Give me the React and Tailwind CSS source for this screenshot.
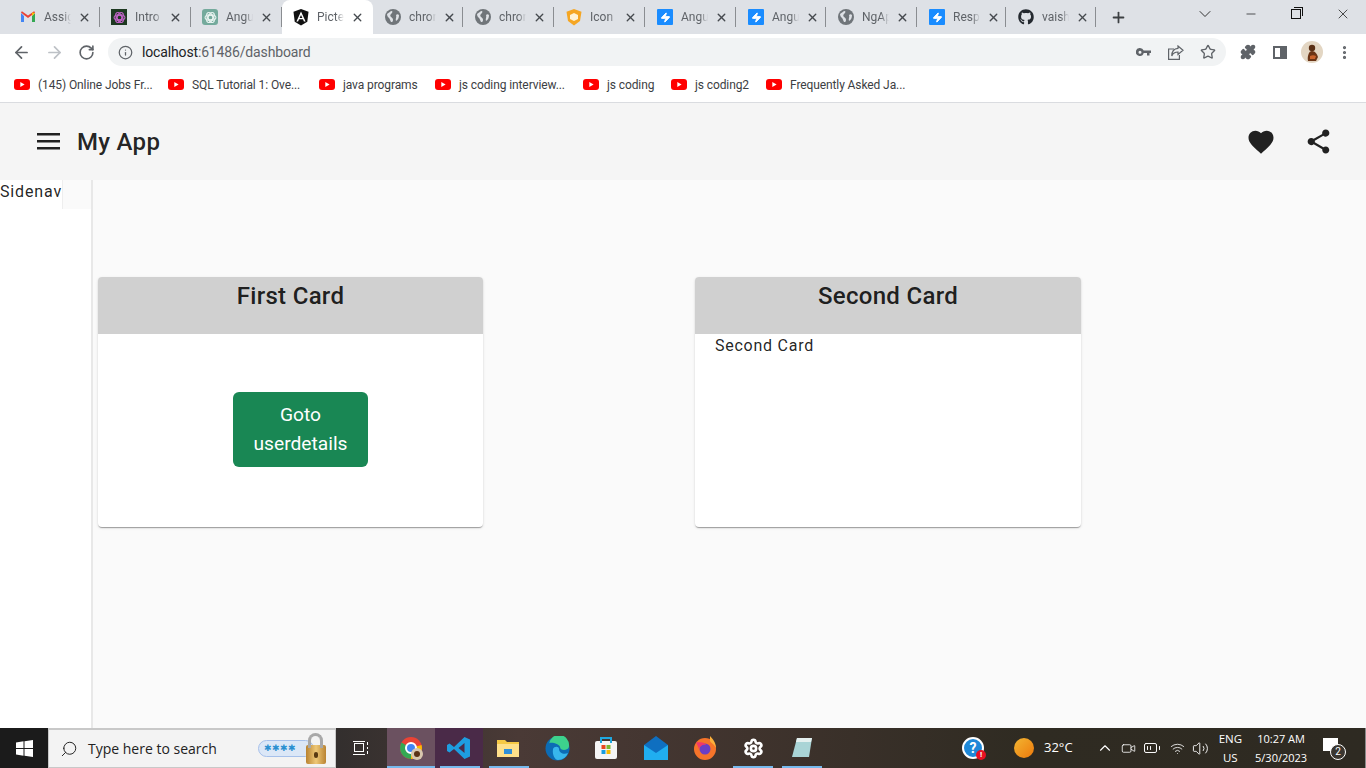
import React from 'react'
import { ArrowLeft, ArrowRight, RotateCw, Info, Star, Puzzle, MoreVertical, ChevronDown, Minus, X, Plus, Search, Zap, ChevronUp, Volume2, Wifi, BatteryMedium, Video, Settings } from 'lucide-react'
import { FaGithub } from 'react-icons/fa'

const font = { fontFamily: 'Roboto, sans-serif' }
const trayFont = { fontFamily: '"Open Sans", sans-serif' }

const Gmail = () => (
  <svg width="16" height="16" viewBox="0 0 16 16" className="shrink-0">
    <path d="M1 4v9h3V7z" fill="#4285f4" />
    <path d="M12 7v6h3V4z" fill="#34a853" />
    <path d="M1 3.500 4 6l4 3 4-3 3-2.500c0-.8-1-1.300-2-.5L8 6.500 3 3c-1-.8-2-.3-2 .5z" fill="#ea4335" />
    <path d="M12 3.500 15 4l-3 3z" fill="#fbbc04" />
  </svg>
)

const OpenAi = ({ bg, color, rounded }) => (
  <span className={`w-4 h-4 flex items-center justify-center shrink-0 ${rounded}`} style={{ background: bg }}>
    <svg width="13" height="13" viewBox="0 0 12 12" fill="none" stroke={color} strokeWidth="1">
      <circle cx="6" cy="6" r="2.200" />
      <ellipse cx="6" cy="6" rx="5" ry="2.600" />
      <ellipse cx="6" cy="6" rx="5" ry="2.600" transform="rotate(60 6 6)" />
      <ellipse cx="6" cy="6" rx="5" ry="2.600" transform="rotate(120 6 6)" />
    </svg>
  </span>
)

const Angular = () => (
  <svg width="16" height="17" viewBox="0 0 16 17" className="shrink-0">
    <path d="M8 0 .5 2.700l1.200 10L8 16.500l6.300-3.800 1.200-10z" fill="#111" />
    <path d="M8 2.500 3.400 12.600h1.700l.9-2.300h4l.9 2.300h1.700zm0 3.400 1.400 3H6.600z" fill="#fff" />
  </svg>
)

const Shield = () => (
  <svg width="16" height="17" viewBox="0 0 16 17" className="shrink-0">
    <path d="M8 0 .5 2.700 2 12l6 4.500 6-4.500 1.500-9.300z" fill="#f5a623" />
    <path d="m8 4 4 2v4l-4 2-4-2V6z" fill="#fff3d6" />
  </svg>
)

const Bolt = () => (
  <span className="w-4 h-4 bg-[#1a8cff] rounded-[1px] flex items-center justify-center shrink-0">
    <Zap size={11} fill="#fff" color="#fff" />
  </span>
)

const GlobeIcon = () => (
  <svg width="16" height="16" viewBox="0 0 16 16" className="shrink-0">
    <circle cx="8" cy="8" r="8" fill="#70757a" />
    <path d="M2 5c2-1 3-3 5-3 1 1 0 2-1 3s-1 2 0 3 2 1 2 3-1 2-2 2c-1-2-1-3-2-4S2 7 2 5zM11 6c1-1 2-1 3 0 0 3-1 5-3 6-1-2 1-4 0-6z" fill="#dee1e6" />
  </svg>
)

const tabs = [
  { icon: <Gmail />, label: 'Assig', w: 100, left: 20 },
  { icon: <OpenAi bg="#1e3a22" color="#c264c8" rounded="" />, label: 'Intro', w: 91, left: 11 },
  { icon: <OpenAi bg="#74aa9c" color="#e8f3f0" rounded="rounded-[3px]" />, label: 'Angu', w: 91, left: 11 },
  { icon: <Angular />, label: 'Picte', w: 91, left: 11, active: true },
  { icon: <GlobeIcon />, label: 'chror', w: 90, left: 12 },
  { icon: <GlobeIcon />, label: 'chror', w: 91, left: 12 },
  { icon: <Shield />, label: 'Icon', w: 91, left: 12 },
  { icon: <Bolt />, label: 'Angu', w: 91, left: 12 },
  { icon: <Bolt />, label: 'Angu', w: 90, left: 12 },
  { icon: <GlobeIcon />, label: 'NgAp', w: 91, left: 12 },
  { icon: <Bolt />, label: 'Resp', w: 89, left: 12 },
  { icon: <FaGithub size={16} color="#24292f" className="shrink-0" />, label: 'vaish', w: 90, left: 12 },
]

const bookmarks = [
  ['(145) Online Jobs Fr...', 'w-[154px]'],
  ['SQL Tutorial 1: Ove...', 'w-[151px]'],
  ['java programs', 'w-[116px]'],
  ['js coding interview...', 'w-[148px]'],
  ['js coding', 'w-[88px]'],
  ['js coding2', 'w-[95px]'],
  ['Frequently Asked Ja...', ''],
]

const Youtube = () => (
  <svg width="16" height="11" viewBox="0 0 16 11" className="shrink-0">
    <rect width="16" height="11" rx="3" fill="#f00" />
    <path d="m6.300 3 4.300 2.500-4.300 2.500z" fill="#fff" />
  </svg>
)

const Tab = ({ t }) => (
  <div
    className={`h-[34px] flex items-center shrink-0 relative ${t.active ? 'bg-white rounded-t-lg' : ''}`}
    style={{ width: t.w, paddingLeft: t.left }}
  >
    {t.icon}
    <span className="ml-[8px] w-[27px] overflow-hidden whitespace-nowrap text-[12px] text-[#5f6368] [mask-image:linear-gradient(90deg,#000_70%,transparent)]">{t.label}</span>
    <X size={13} strokeWidth={2.5} color="#45494e" className="ml-[7px] shrink-0" />
    {!t.active && <span className="absolute right-0 top-[7px] h-5 w-px bg-[#8a8d91]" />}
  </div>
)

const Chrome = () => (
  <div className="shrink-0">
    <div className="h-[34px] bg-[#dee1e6] flex items-center">
      {tabs.map((t, i) => <Tab key={i} t={t} />)}
      <Plus size={17} strokeWidth={2.5} color="#3c4043" className="ml-[14px]" />
      <div className="ml-auto flex items-center h-full pb-[6px]">
        <ChevronDown size={20} strokeWidth={1.1} color="#222" className="mr-[29px]" />
        <Minus size={14} strokeWidth={1.2} color="#111" className="mr-[33px]" />
        <span className="w-[10px] h-[10px] border border-[#111] mr-[34px] relative">
          <span className="absolute -top-[3px] -right-[3px] w-[9px] h-[9px] border-t border-r border-[#111]" />
        </span>
        <X size={16} strokeWidth={1.1} color="#111" className="mr-[15px]" />
      </div>
    </div>
    <div className="h-[36px] bg-white flex items-center">
      <ArrowLeft size={19} strokeWidth={2.2} color="#5f6368" className="ml-[12px]" />
      <ArrowRight size={19} strokeWidth={2.2} color="#bdc1c6" className="ml-[14px]" />
      <RotateCw size={17} strokeWidth={2.3} color="#5f6368" className="ml-[14px]" />
      <div className="ml-[13px] w-[1118px] h-[28px] rounded-full bg-[#f1f3f4] flex items-center pl-[10px]">
        <Info size={15} strokeWidth={2} color="#5f6368" />
        <span className="ml-[9px] text-[14px] tracking-[-0.15px] text-[#5f6368]"><span className="text-[#202124]">localhost</span>:61486/dashboard</span>
        <svg width="15" height="9" viewBox="0 0 15 9" fill="#5f6368" className="ml-auto">
          <path d="M4 0a4 4 0 0 1 3.700 2.500H15V5h-1.500v2.500h-2.500V5H7.700A4 4 0 1 1 4 0zm0 2.700a1.500 1.500 0 1 0 0 3 1.500 1.500 0 0 0 0-3z" fillRule="evenodd" />
        </svg>
        <svg width="16" height="15" viewBox="0 0 16 15" fill="none" stroke="#5f6368" strokeWidth="1.2" className="ml-[17px]">
          <path d="M6 4H.6v10.400h10.800V10" />
          <path d="M10 1l5 4.200-5 4.200V7C7 7 5 8 3.800 11 3.800 6.500 6 3.500 10 3.300z" />
        </svg>
        <Star size={16} strokeWidth={2} color="#5f6368" className="ml-[16px] mr-[10px]" />
      </div>
      <Puzzle size={16} fill="#5f6368" color="#5f6368" className="ml-[14px]" />
      <span className="ml-[17px] w-[14px] h-[13px] border-2 border-[#5f6368] flex justify-end"><span className="w-[5px] h-full bg-[#5f6368]" /></span>
      <svg width="22" height="22" viewBox="0 0 22 22" className="ml-[14px]">
        <circle cx="11" cy="11" r="11" fill="#e3d6c3" />
        <circle cx="11" cy="7" r="3.200" fill="#5a2f14" />
        <path d="M7 20c-1-5 1-10 4-10s5 3 6 6l-2 4z" fill="#6b3415" />
        <path d="M9 15c2-1 4-1 6 0l-1 3H9z" fill="#c9622b" />
      </svg>
      <MoreVertical size={17} strokeWidth={2.5} color="#5f6368" className="ml-[13px]" />
    </div>
    <div className="h-[33px] bg-white border-b border-[#dadce0] flex items-center pl-[14px] pb-[3px]">
      {bookmarks.map(([b, w], i) => (
        <div key={i} className={`flex items-center shrink-0 ${w}`}>
          <Youtube />
          <span className="ml-[8px] text-[12px] tracking-[-0.1px] text-[#3c4043] whitespace-nowrap">{b}</span>
        </div>
      ))}
    </div>
  </div>
)

const Card = ({ title, width, children }) => (
  <div className={`${width} h-[250px] bg-white rounded shadow-[0_2px_1px_-1px_rgba(0,0,0,0.2),0_1px_1px_0_rgba(0,0,0,0.14),0_1px_3px_0_rgba(0,0,0,0.12)] overflow-hidden`}>
    <div className="h-[57px] bg-[#d0d0d0] text-center text-[24px] font-medium leading-[38px] tracking-[0.3px] text-[rgba(0,0,0,0.87)]">{title}</div>
    {children}
  </div>
)

const Page = () => (
  <div className="flex-1 flex flex-col min-h-0" style={font}>
    <div className="h-[77px] bg-[#f5f5f5] flex items-center shrink-0 pl-[37px]">
      <svg width="23" height="17" viewBox="0 0 23 17" fill="#212121">
        <rect width="23" height="2.500" y="0" />
        <rect width="23" height="2.500" y="7" />
        <rect width="23" height="2.500" y="14" />
      </svg>
      <span className="ml-[17px] text-[24px] font-medium tracking-[0.3px] text-[rgba(0,0,0,0.87)]">My App</span>
      <svg width="30" height="30" viewBox="0 0 24 24" fill="#212121" className="ml-auto">
        <path d="m12 21.350-1.450-1.320C5.400 15.360 2 12.280 2 8.500 2 5.420 4.420 3 7.500 3c1.740 0 3.410.81 4.500 2.090C13.090 3.810 14.760 3 16.500 3 19.580 3 22 5.420 22 8.500c0 3.780-3.400 6.860-8.550 11.540z" />
      </svg>
      <svg width="29" height="29" viewBox="0 0 24 24" fill="#212121" className="ml-[28px] mr-[33px]">
        <path d="M18 16.080c-.76 0-1.440.3-1.960.77L8.910 12.700c.05-.23.09-.46.09-.7s-.04-.47-.09-.7l7.050-4.110c.54.5 1.250.81 2.040.81 1.660 0 3-1.340 3-3s-1.340-3-3-3-3 1.340-3 3c0 .24.04.47.09.7L8.040 9.810C7.500 9.310 6.790 9 6 9c-1.660 0-3 1.340-3 3s1.340 3 3 3c.79 0 1.500-.31 2.040-.81l7.120 4.160c-.05.21-.08.43-.08.65 0 1.610 1.310 2.920 2.920 2.920s2.920-1.310 2.920-2.920-1.310-2.920-2.920-2.920z" />
      </svg>
    </div>
    <div className="flex-1 flex min-h-0">
      <div className="w-[93px] bg-white border-r-2 border-[#e8e8e8] shrink-0">
        <div className="flex h-[29px]">
          <span className="w-[62px] text-[16px] leading-[22px] pt-[1px] tracking-[0.85px] text-[rgba(0,0,0,0.87)] overflow-hidden whitespace-nowrap">Sidenav</span>
          <span className="w-[29px] bg-[#fafafa] border-l border-[#eeeeee]" />
        </div>
      </div>
      <div className="flex-1 bg-[#fafafa] pt-[97px] pl-[5px] flex items-start gap-[212px]">
        <Card title="First Card" width="w-[385px]">
          <div className="pt-[58px] pl-[135px]">
            <button className="w-[135px] h-[75px] rounded-md bg-[#198754] text-white text-[19.2px] leading-[29px] pb-[2px]">Goto<br />userdetails</button>
          </div>
        </Card>
        <Card title="Second Card" width="w-[386px]">
          <p className="pl-[20px] pt-[1px] text-[16px] leading-[22px] tracking-[0.75px] text-[rgba(0,0,0,0.87)]">Second Card</p>
        </Card>
      </div>
    </div>
  </div>
)

// running app marker under a taskbar button
const Running = ({ className }) => <span className={`absolute bottom-0 h-[2px] bg-[#76b9ed] ${className}`} />

const Taskbar = () => (
  <div className="h-10 shrink-0 flex items-center border-r border-[#8a8a8a] bg-[linear-gradient(90deg,#1c1c1c_0%,#2b2b2b_20%,#4a3a36_38%,#3f332d_55%,#2f2b22_75%,#2e2a22_100%)] text-white">
    <div className="w-[48px] h-full bg-[#1b1b1b] flex items-center justify-center">
      <svg width="17" height="17" viewBox="0 0 17 17" fill="#fff">
        <path d="M0 2.400 7.500 1.300v6.700H0zM8.500 1.200 17 0v8H8.500zM0 9h7.500v6.700L0 14.600zM8.500 9H17v8l-8.500-1.200z" />
      </svg>
    </div>
    <div className="w-[288px] h-full bg-[#f3f3f3] border-t-2 border-b border-x border-[#c8c8c8] flex items-center pl-[11px] relative">
      <Search size={18} strokeWidth={1.3} color="#222" className="-scale-x-100" />
      <span className="ml-[10px] text-[14px] text-[#222]" style={trayFont}>Type here to search</span>
      <span className="absolute left-[209px] top-[10px] w-[56px] h-[17px] rounded-full bg-[#dbe7f7] border border-[#a6c0ea] text-[#2a8fd0] text-[9px] leading-[15px] pl-[5px] tracking-[0.5px]" style={{ fontFamily: '"DejaVu Sans", sans-serif' }}>✱✱✱✱</span>
      <span className="absolute left-[257px] top-[15px] w-[20px] h-[19px] rounded-[2px] bg-[linear-gradient(90deg,#b98332,#eec877,#b98332)]" />
      <span className="absolute left-[259px] top-[3px] w-[15px] h-[15px] border-[3px] border-b-0 border-[#a8a8a8] rounded-t-full" />
      <span className="absolute left-[265px] top-[22px] w-[4px] h-[6px] rounded-full bg-[#5a3a12]" />
    </div>
    <div className="w-[51px] flex justify-center">
      <svg width="16" height="16" viewBox="0 0 16 16" fill="none" stroke="#fff" className="-ml-[2px]">
        <rect x="1.500" y="3.500" width="9" height="8" /><path d="M0 1.500h12M0 14.500h12M14.500 2v3M14.500 7v2M14.500 11v3" />
      </svg>
    </div>
    <div className="w-[48px] h-full bg-[#6b5160] flex items-center justify-center relative">
      <svg width="24" height="24" viewBox="0 0 24 24">
        <circle cx="12" cy="12" r="11" fill="#ea4335" />
        <path d="M12 12 22.500 9A11 11 0 0 1 12 23z" fill="#fbbc04" />
        <path d="M12 12 12 23A11 11 0 0 1 2.500 6.500z" fill="#34a853" />
        <circle cx="12" cy="12" r="5" fill="#4285f4" stroke="#fff" strokeWidth="2" />
        <circle cx="18" cy="18" r="6" fill="#d8c7ae" />
        <circle cx="18" cy="18" r="3" fill="#5a3216" />
      </svg>
      <Running className="left-0 right-0" />
    </div>
    <div className="w-[48px] h-full bg-[#4a2a48] flex items-center justify-center relative">
      <svg width="24" height="24" viewBox="0 0 24 24">
        <path d="M17.500 1 23 3.500v17L17.500 23 7 13l-4.500 3.500L0 15V9l2.500-1.500L7 11z" fill="#1e9de0" />
        <path d="M17.500 7 11.500 12l6 5z" fill="#4a2a48" />
      </svg>
      <Running className="left-[5px] right-[3px]" />
    </div>
    <div className="w-[50px] h-full flex items-center justify-center relative">
      <svg width="22" height="18" viewBox="0 0 22 18">
        <path d="M0 1h8l2 2h12v15H0z" fill="#f6c945" />
        <rect x="0" y="5" width="22" height="13" fill="#ffe08a" />
        <rect x="7" y="10" width="8" height="5" fill="#2f8fd8" />
      </svg>
      <Running className="left-[6px] right-[4px]" />
    </div>
    <div className="w-[48px] flex justify-center">
      <svg width="25" height="25" viewBox="0 0 25 25">
        <circle cx="12.500" cy="12.500" r="12" fill="#0c6cb5" />
        <path d="M4 8a10 10 0 0 1 20 2c0 5-9 5-9 1 0-3-11-6-11-3z" fill="#3dd18d" />
        <path d="M8 13c1-3 6-3 6 0 0 4 5 6 9 4a11 11 0 0 1-10 7c-3 0-6-5-5-11z" fill="#38b6ec" />
      </svg>
    </div>
    <div className="w-[50px] flex justify-center">
      <svg width="24" height="24" viewBox="0 0 24 24">
        <rect x="1" y="5" width="22" height="18" rx="2" fill="#f5f5f5" />
        <path d="M7 7V2h10v5" fill="none" stroke="#1fa8e0" strokeWidth="2" />
        <rect x="7.500" y="9" width="4" height="4" fill="#e8461f" />
        <rect x="12.500" y="9" width="4" height="4" fill="#7cb82f" />
        <rect x="7.500" y="14" width="4" height="4" fill="#1a9de0" />
        <rect x="12.500" y="14" width="4" height="4" fill="#f6b900" />
      </svg>
    </div>
    <div className="w-[49px] flex justify-center">
      <svg width="24" height="24" viewBox="0 0 24 24">
        <path d="M0 9 12 0l12 9v15H0z" fill="#0f6fc0" />
        <path d="M0 9 12 17 24 9v15H0z" fill="#20aef0" />
      </svg>
    </div>
    <div className="w-[49px] flex justify-center">
      <svg width="24" height="24" viewBox="0 0 24 24">
        <circle cx="12" cy="13" r="11" fill="#f6742a" />
        <path d="M17 0c3 3 6 7 6 12-2-4-5-5-6-7z" fill="#fbb03b" />
        <circle cx="12" cy="13" r="5.500" fill="#6b3fc4" />
        <path d="M3 6c2 1 8-1 10 3-3-1-6 1-7 4z" fill="#f0386b" />
      </svg>
    </div>
    <div className="w-[48px] h-full flex items-center justify-center relative">
      <Settings size={21} strokeWidth={3} color="#fff" />
      <Running className="left-[4px] right-[4px]" />
    </div>
    <div className="w-[50px] h-full flex items-center justify-center relative">
      <svg width="22" height="22" viewBox="0 0 22 22">
        <path d="M6 1h15l-3 19H1z" fill="#a9d4d6" />
        <path d="M6 1h15l-1 4H5z" fill="#e4f0ef" />
      </svg>
      <Running className="left-[5px] right-[5px]" />
    </div>
    <div className="ml-[135px] w-[22px] h-[22px] rounded-full bg-[#1e88d8] border-2 border-white text-[14px] leading-[18px] text-center font-bold relative shrink-0" style={font}>
      ?
      <span className="absolute -right-[4px] bottom-[-3px] w-[10px] h-[10px] rounded-full bg-[#e81123] text-[8px] leading-[10px]">!</span>
    </div>
    <span className="ml-[30px] w-5 h-5 rounded-full bg-[linear-gradient(135deg,#f2b632,#ee7a0c)] shrink-0" />
    <span className="ml-[10px] text-[13px]" style={trayFont}>32°C</span>
    <ChevronUp size={18} strokeWidth={1.5} className="ml-[23px]" />
    <Video size={15} strokeWidth={1.3} className="ml-[7px]" />
    <BatteryMedium size={18} strokeWidth={1.3} className="ml-[7px]" />
    <Wifi size={15} strokeWidth={1.3} className="ml-[9px]" />
    <Volume2 size={17} strokeWidth={1.3} className="ml-[7px]" />
    <div className="ml-[10px] text-[11.5px] leading-[19px] text-center" style={trayFont}>ENG<br />US</div>
    <div className="ml-[13px] text-[11px] leading-[19px] text-center whitespace-nowrap" style={trayFont}>10:27 AM<br />5/30/2023</div>
    <div className="ml-[16px] relative w-[20px] h-[20px] shrink-0">
      <span className="absolute left-0 top-0 w-[15px] h-[13px] bg-white" />
      <span className="absolute left-[7px] top-[6px] w-[16px] h-[16px] rounded-full bg-[#3a3630] border border-white text-[10px] leading-[14px] text-center" style={font}>2</span>
    </div>
  </div>
)

export default function App() {
  return (
    <div className="w-[1366px] h-[768px] overflow-hidden flex flex-col" style={font}>
      <Chrome />
      <Page />
      <Taskbar />
    </div>
  )
}
